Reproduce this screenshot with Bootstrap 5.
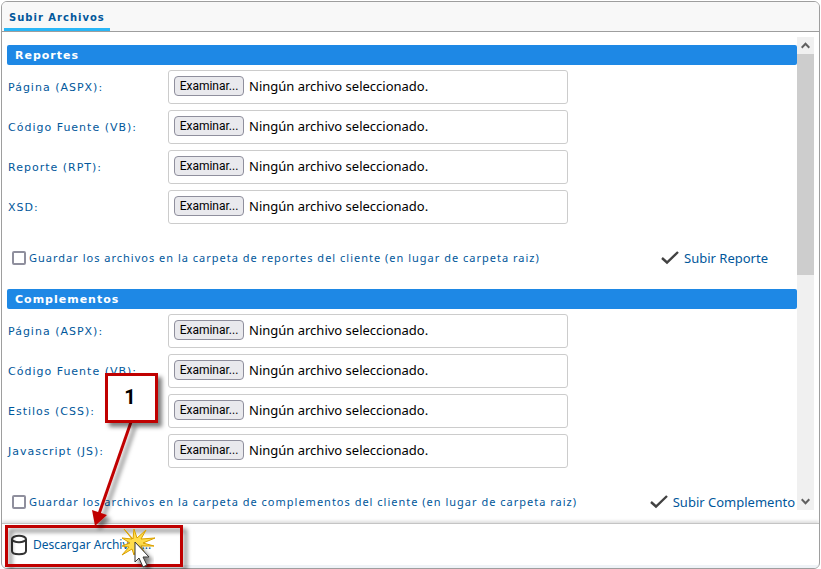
<!DOCTYPE html>
<html lang="es">
<head>
<meta charset="utf-8">
<meta name="viewport" content="width=device-width, initial-scale=1">
<title>Subir Archivos</title>
<link rel="stylesheet" href="https://cdn.jsdelivr.net/npm/bootstrap@5.3.0/dist/css/bootstrap.min.css">
<style>
body{font-family:"Noto Sans",sans-serif;font-size:13px;line-height:18px;color:#000;padding:1px}
.panel{border:1px solid #9e9e9e;border-radius:6px;min-height:calc(100vh - 2px)}
.panel-head{background:#f8f8f8;border-bottom:1px solid #9e9e9e;padding:0 2px}
.tab-btn{background:none;border:0;border-bottom:3px solid #29b6f6;height:29px;padding:5px 5px 0;color:#01579b}
.bar,.lbl{font-size:11px;letter-spacing:1px}
.tab-btn{font-size:10px;letter-spacing:1px}
.tab-btn,.bar,.field .lbl{font-family:"DejaVu Sans",sans-serif}
.panel-body{padding:5px 5px 13px}
.main-col{padding-top:8px}
.bar{background:#1e88e5;color:#fff;height:20px;line-height:20px;border-radius:2px;padding:1px 8px 0;margin:0 0 5px}
.lbl{color:#01579b}
.rows{gap:6px}
.field .lbl{width:161px;padding:2px 0 0 1px}
.file-box{width:400px;height:34px;border:1px solid #ccc;border-radius:3px;padding:0 5px 2px;gap:5px}
.pick{font-family:Roboto,sans-serif;font-size:12px;line-height:18px;width:70px;height:20px;padding:0;border:1px solid #8f8f9d;border-radius:4px;background:#e9e9ed;white-space:nowrap}
.options{margin-top:26px;height:16px;padding-left:5px}
.options .lbl{padding-left:3px}
.options .form-check-input{width:14px;height:14px;margin:0;border:2px solid #8f8f9d;border-radius:2px}
.link-btn{background:none;border:0;padding:0;color:#01579b;white-space:nowrap}
.group+.group{margin-top:23px}
.end-wide{margin-right:29px}
.end-slim{margin-right:2px}
.scroll-col{width:17px;background:#f0f0f0}
.scroll-col button{border:0;background:none;padding:0;height:17px}
.thumb{height:221px;background:#cdcdcd}
.panel-foot{border-top:1px solid #c4c4c4;border-bottom:3px solid #eff3f7;height:45px;padding:0 7px;box-shadow:0 -2px 3px #0002}
.panel-foot .link-btn{font-size:12px;gap:5px}
.notes{left:0;bottom:0;pointer-events:none}
</style>
<script src="https://cdn.jsdelivr.net/npm/bootstrap@5.3.0/dist/js/bootstrap.bundle.min.js"></script>
</head>
<body class="position-relative bg-white">
<main class="panel d-flex flex-column overflow-hidden">
  <header class="panel-head d-flex"><button type="button" class="tab-btn fw-bold">Subir Archivos</button></header>
  <div class="panel-body d-flex flex-grow-1">
    <div class="main-col flex-grow-1">
      <section class="group">
        <h2 class="bar fw-bold">Reportes</h2>
        <div class="rows d-flex flex-column">
          <div class="field d-flex align-items-center"><label class="lbl" for="r1">Página (ASPX):</label><div class="file-box d-flex align-items-center"><button type="button" class="pick" id="r1">Examinar...</button><span>Ningún archivo seleccionado.</span></div></div>
          <div class="field d-flex align-items-center"><label class="lbl" for="r2">Código Fuente (VB):</label><div class="file-box d-flex align-items-center"><button type="button" class="pick" id="r2">Examinar...</button><span>Ningún archivo seleccionado.</span></div></div>
          <div class="field d-flex align-items-center"><label class="lbl" for="r3">Reporte (RPT):</label><div class="file-box d-flex align-items-center"><button type="button" class="pick" id="r3">Examinar...</button><span>Ningún archivo seleccionado.</span></div></div>
          <div class="field d-flex align-items-center"><label class="lbl" for="r4">XSD:</label><div class="file-box d-flex align-items-center"><button type="button" class="pick" id="r4">Examinar...</button><span>Ningún archivo seleccionado.</span></div></div>
        </div>
        <div class="options d-flex align-items-center justify-content-between">
          <div class="d-flex align-items-center"><input class="form-check-input" type="checkbox" id="c1"><label class="lbl" for="c1">Guardar los archivos en la carpeta de reportes del cliente (en lugar de carpeta raiz)</label></div>
          <button type="button" class="link-btn end-wide d-flex align-items-center gap-1"><svg width="19" height="16" viewBox="0 0 19 16" fill="none" stroke="#424242" stroke-width="2.400"><path d="M1 8l5 4.500L17 2"/></svg>Subir Reporte</button>
        </div>
      </section>
      <section class="group">
        <h2 class="bar fw-bold">Complementos</h2>
        <div class="rows d-flex flex-column">
          <div class="field d-flex align-items-center"><label class="lbl" for="k1">Página (ASPX):</label><div class="file-box d-flex align-items-center"><button type="button" class="pick" id="k1">Examinar...</button><span>Ningún archivo seleccionado.</span></div></div>
          <div class="field d-flex align-items-center"><label class="lbl" for="k2">Código Fuente (VB):</label><div class="file-box d-flex align-items-center"><button type="button" class="pick" id="k2">Examinar...</button><span>Ningún archivo seleccionado.</span></div></div>
          <div class="field d-flex align-items-center"><label class="lbl" for="k3">Estilos (CSS):</label><div class="file-box d-flex align-items-center"><button type="button" class="pick" id="k3">Examinar...</button><span>Ningún archivo seleccionado.</span></div></div>
          <div class="field d-flex align-items-center"><label class="lbl" for="k4">Javascript (JS):</label><div class="file-box d-flex align-items-center"><button type="button" class="pick" id="k4">Examinar...</button><span>Ningún archivo seleccionado.</span></div></div>
        </div>
        <div class="options d-flex align-items-center justify-content-between">
          <div class="d-flex align-items-center"><input class="form-check-input" type="checkbox" id="c2"><label class="lbl" for="c2">Guardar los archivos en la carpeta de complementos del cliente (en lugar de carpeta raiz)</label></div>
          <button type="button" class="link-btn end-slim d-flex align-items-center gap-1"><svg width="19" height="16" viewBox="0 0 19 16" fill="none" stroke="#424242" stroke-width="2.400"><path d="M1 8l5 4.500L17 2"/></svg>Subir Complemento</button>
        </div>
      </section>
    </div>
    <div class="scroll-col d-flex flex-column flex-shrink-0">
      <button type="button" aria-label="Desplazar arriba" class="d-flex align-items-center justify-content-center"><svg width="9" height="7" viewBox="0 0 9 7" fill="none" stroke="#606060" stroke-width="2"><path d="M.7 5.700L4.500 1.800l3.800 3.900"/></svg></button>
      <div class="thumb"></div>
      <button type="button" aria-label="Desplazar abajo" class="mt-auto d-flex align-items-center justify-content-center"><svg width="9" height="7" viewBox="0 0 9 7" fill="none" stroke="#606060" stroke-width="2"><path d="M.7 1.300l3.800 3.900 3.800-3.900"/></svg></button>
    </div>
  </div>
  <footer class="panel-foot d-flex align-items-center">
    <button type="button" class="link-btn d-flex align-items-center"><svg width="19" height="22" viewBox="0 0 19 22" fill="none" stroke="#333" stroke-width="2"><ellipse cx="10" cy="5" rx="7" ry="3.200"/><path d="M3 5v12c0 4.300 14 4.300 14 0V5"/></svg>Descargar Archivos...</button>
  </footer>
</main>
<svg class="notes position-absolute" width="200" height="210" viewBox="0 359 200 210" role="img" aria-label="Paso 1">
  <defs><filter id="sh" x="-20%" y="-20%" width="150%" height="150%"><feDropShadow dx="4" dy="4" stdDeviation="2" flood-color="#000" flood-opacity=".5"/></filter></defs>
  <g filter="url(#sh)"><rect x="6.500" y="525.500" width="175" height="39" fill="none" stroke="#c00000" stroke-width="3"/></g>
  <g filter="url(#sh)"><path d="M131 421L99 513" stroke="#c00000" stroke-width="3"/><path d="M95 525l-3-16 15 5z" fill="#c00000"/></g>
  <g filter="url(#sh)"><rect x="106.500" y="373.500" width="50" height="47" fill="#fff" stroke="#c00000" stroke-width="3"/></g>
  <text x="130" y="403" text-anchor="middle" font-family="Roboto, sans-serif" font-size="20" font-weight="bold">1</text>
  <path d="M124 528l9 10 1-10 3 9 9-8-5 9 14-1-12 5 11 3-13 0 3 6-7-4-3 7-2-6-10 6 7-8-7-1 8-3-8-5 10 1z" fill="#ffdc4a" stroke="#daa000"/>
  <g filter="url(#sh)"><path d="M135 541v20l4-4 4 9 4-2-4-8h6z" fill="#fff" stroke="#333"/></g>
</svg>
</body>
</html>
